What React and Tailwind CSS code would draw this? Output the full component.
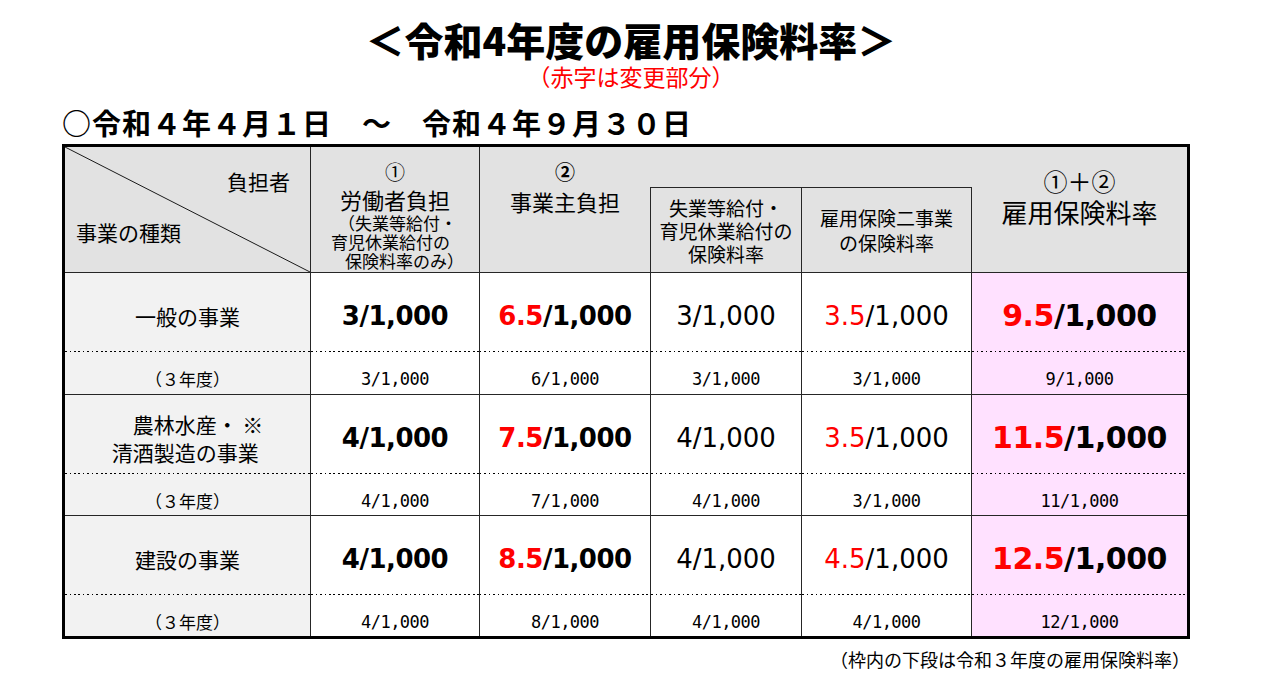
import React from "react";

const JP = "font-['Noto_Sans_CJK_JP',sans-serif]";
const NUM = "font-['DejaVu_Sans','Noto_Sans_CJK_JP',sans-serif]";
const OLD = "font-['DejaVu_Sans_Mono','Noto_Sans_CJK_JP',monospace]";
const LINE = "border-[#262626]";
const DOTS = "h-px bg-[repeating-linear-gradient(to_right,#000_0px,#000_1.5px,transparent_1.5px,transparent_4.5px)]";

const rows = [
  { label: <div className="text-[21px] leading-[28px]">一般の事業</div>,
    v: [{ b: "3/1,000" }, { r: "6.5", b: "/1,000" }, { b: "3/1,000" }, { r: "3.5", b: "/1,000" }, { r: "9.5", b: "/1,000" }],
    old: ["3/1,000", "6/1,000", "3/1,000", "3/1,000", "9/1,000"], sub: "h-[42px]", line: true },
  { label: (
      <div className="text-[21px] leading-[28px] text-left whitespace-pre">
        <div>{"　農林水産・ ※"}</div>
        <div>清酒製造の事業</div>
      </div>),
    v: [{ b: "4/1,000" }, { r: "7.5", b: "/1,000" }, { b: "4/1,000" }, { r: "3.5", b: "/1,000" }, { r: "11.5", b: "/1,000" }],
    old: ["4/1,000", "7/1,000", "4/1,000", "3/1,000", "11/1,000"], sub: "h-[41px]", line: true },
  { label: <div className="text-[21px] leading-[28px]">建設の事業</div>,
    v: [{ b: "4/1,000" }, { r: "8.5", b: "/1,000" }, { b: "4/1,000" }, { r: "4.5", b: "/1,000" }, { r: "12.5", b: "/1,000" }],
    old: ["4/1,000", "8/1,000", "4/1,000", "4/1,000", "12/1,000"], sub: "h-[41px]", line: false },
];

// style of the big figure per column (2..6)
const COL = [
  "text-[26px] font-bold tracking-[-0.5px]",
  "text-[26px] font-bold tracking-[-0.5px]",
  "text-[26px]",
  "text-[26px]",
  "text-[30px] font-bold tracking-[-0.5px]",
];

function Cell({ main, old, sub, bg, last, numCls }) {
  return (
    <div className={`flex flex-col ${bg || "bg-white"} ${last ? "" : `border-r ${LINE}`}`}>
      <div className={`h-[78px] pt-[7px] flex items-center justify-center leading-[32px] ${numCls}`}>{main}</div>
      <div className={DOTS} />
      <div className={`${sub} pt-[12px] flex items-center justify-center`}>{old}</div>
    </div>
  );
}

export default function App() {
  return (
    <div className={`w-[1262px] h-[697px] bg-white text-black ${JP}`}>
      <div className="pt-[19px] text-center text-[39px] leading-[40px] font-black">＜令和4年度の雇用保険料率＞</div>
      <div className="mt-[5px] text-center text-[23px] leading-[24px] text-[#ff0000]">（赤字は変更部分）</div>
      <div className="mt-[18px] pl-[62px] text-[29px] leading-[32px] font-bold tracking-[1px] whitespace-pre">{"○令和４年４月１日　～　令和４年９月３０日"}</div>

      <div className="ml-[62px] mt-[6px] w-[1128px] border-[3px] border-black">
        {/* header */}
        <div className={`grid grid-cols-[246px_169px_170px_152px_170px_1fr] grid-rows-[40px_85px] bg-[#e2e2e2] border-b ${LINE}`}>
          <div className={`row-span-2 relative border-r ${LINE}`}>
            <svg className="absolute inset-0 w-full h-full" preserveAspectRatio="none" viewBox="0 0 100 100">
              <line x1="0" y1="0" x2="100" y2="100" stroke="#1a1a1a" strokeWidth="1" vectorEffect="non-scaling-stroke" />
            </svg>
            <div className="relative text-right pr-[20px] pt-[21px] text-[21px] leading-[26px]">負担者</div>
            <div className="relative pl-[11px] mt-[25px] text-[21px] leading-[26px]">事業の種類</div>
          </div>
          <div className={`row-span-2 border-r ${LINE} flex flex-col items-center pt-[14px]`}>
            <div className="text-[20px] leading-[22px]">①</div>
            <div className="mt-[3px] text-[22px] leading-[27px]">労働者負担</div>
            <div className="w-[128px] text-[17px] leading-[19px] whitespace-pre">
              <div className="pl-[7px]">（失業等給付・</div>
              <div>育児休業給付の</div>
              <div className="pl-[14px]">保険料率のみ）</div>
            </div>
          </div>
          <div className="row-span-2 flex flex-col items-center pt-[14px]">
            <div className="text-[20px] leading-[22px] font-bold">②</div>
            <div className="mt-[4px] text-[22px] leading-[28px]">事業主負担</div>
          </div>
          <div className="col-span-2" />
          <div className="row-span-2 col-start-6 row-start-1 flex flex-col items-center pt-[20px]">
            <div className="text-[24px] leading-[28px] whitespace-pre">{"①＋②"}</div>
            <div className="text-[26px] leading-[34px]">雇用保険料率</div>
          </div>
          <div className={`col-start-4 row-start-2 border-t border-l border-r ${LINE} flex flex-col items-center justify-center text-[19px] leading-[23px]`}>
            <div>失業等給付・</div>
            <div>育児休業給付の</div>
            <div>保険料率</div>
          </div>
          <div className={`col-start-5 row-start-2 border-t border-r ${LINE} flex flex-col items-center justify-center text-[19px] leading-[25px]`}>
            <div>雇用保険二事業</div>
            <div>の保険料率</div>
          </div>
        </div>

        {/* body */}
        {rows.map((row, i) => (
          <div key={i} className={`grid grid-cols-[246px_169px_171px_151px_170px_1fr] ${row.line ? `border-b ${LINE}` : ""}`}>
            <Cell
              bg="bg-[#f2f2f2]"
              numCls="text-center"
              sub={row.sub}
              main={row.label}
              old={<span className="text-[17px] leading-[20px]">（３年度）</span>}
            />
            {row.v.map((v, j) => (
              <Cell
                key={j}
                last={j === 4}
                bg={j === 4 ? "bg-[#ffe1ff]" : "bg-white"}
                numCls={`${NUM} ${COL[j]}`}
                sub={row.sub}
                main={<span>{v.r && <span className="text-[#ff0000]">{v.r}</span>}{v.b}</span>}
                old={<span className={`${OLD} text-[17px] leading-[20px] tracking-[-0.5px]`}>{row.old[j]}</span>}
              />
            ))}
          </div>
        ))}
      </div>

      <div className="w-[1190px] mt-[9px] text-right text-[18px] leading-[22px]">（枠内の下段は令和３年度の雇用保険料率）</div>
    </div>
  );
}
